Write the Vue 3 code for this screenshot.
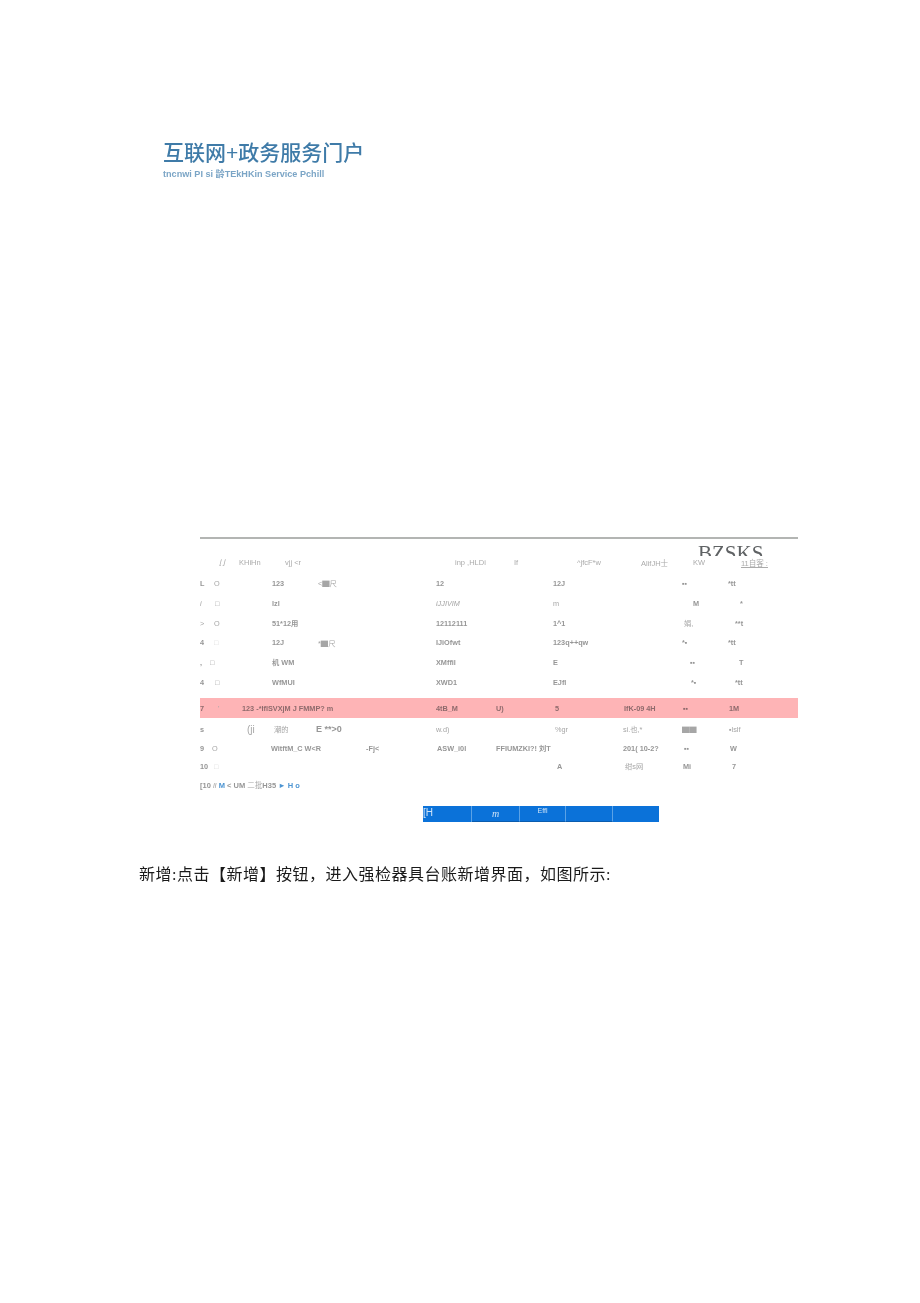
<script setup>
const END = 798
const left = 200
const mk = (cells) => cells.map((c, i) => {
  const next = i + 1 < cells.length ? cells[i + 1][0] : END
  return { text: c[1], w: next - c[0], cls: c[2] || '' }
})
const lead = (cells) => (cells[0][0] > left ? [[left, ''], ...cells] : cells)
const raw = [
  { cls: 'h20', cells: [[200, 'L'], [214, 'O', 'lt'], [272, '123'], [318, '<▇尺', 'lt'], [436, '12'], [553, '12J'], [682, '▪▪'], [728, '*tt']] },
  { cls: 'h20', cells: [[200, 'i', 'it lt'], [215, '□', 'lt'], [272, 'lzl'], [436, 'iJJIVIM', 'it lt'], [553, 'm', 'lt'], [693, 'M'], [740, '*']] },
  { cls: 'h20', cells: [[200, '>', 'lt'], [214, 'O', 'lt'], [272, '51*12用'], [436, '12112111'], [553, '1^1'], [684, '娟,', 'lt'], [735, '**t']] },
  { cls: 'h19', cells: [[200, '4'], [214, '□', 'xl'], [272, '12J'], [318, '*▇尺', 'lt'], [436, 'IJiOfwt'], [553, '123q++qw'], [682, '*▪'], [728, '*tt']] },
  { cls: 'h20', cells: [[200, ','], [210, '□', 'lt'], [272, '机 WM'], [436, 'XMffil'], [553, 'E'], [690, '▪▪'], [739, 'T']] },
  { cls: 'h20', cells: [[200, '4'], [215, '□', 'lt'], [272, 'WfMUI'], [436, 'XWD1'], [553, 'EJfl'], [691, '*▪'], [735, '*tt']] },
]
const rows = raw.map((r) => ({ cls: r.cls, cells: mk(lead(r.cells)) }))
const header = mk([[200, ''], [219, '⌊⌋', 'it'], [239, 'KHiHn'], [285, 'vjj <r'], [455, 'inp ,HLDi'], [514, 'If'], [577, '^jfcF*w'], [641, 'AlifJH士'], [693, 'KW'], [741, '11自客 :', 'ul']])
const pink = mk([[200, '7'], [218, "'", 'lt'], [242, '123 -*IflSVXjM J FMMP? m'], [436, '4tB_M'], [496, 'U)'], [555, '5'], [624, 'IfK-09 4H'], [683, '▪▪'], [729, '1M']])
const lower = [
  { cls: 'h20', cells: mk([[200, 's'], [247, '(ji', 'big lt'], [274, '潮的', 'lt'], [316, 'E **>0', 'mid'], [436, 'w.d)', 'lt'], [555, '%gr', 'lt'], [623, 'si.也,*', 'lt'], [682, '▇▇', 'lt'], [729, '▪lslf', 'lt']]) },
  { cls: 'h18', cells: mk([[200, '9'], [212, 'O', 'lt'], [271, 'WitftM_C W<R'], [366, '-Fj<'], [437, 'ASW_i0l'], [496, 'FFIUMZKI?! 刘T'], [623, '201( 10-2?'], [684, '▪▪'], [730, 'W']]) },
  { cls: 'h18', cells: mk([[200, '10'], [214, '□', 'xl'], [557, 'A'], [625, '绀s网', 'lt'], [683, 'Mi'], [732, '7']]) },
]
const segments = [
  { w: 49, text: '[H', cls: 'first' },
  { w: 48, text: 'm', cls: 'ital under' },
  { w: 46, text: 'Effl', cls: 'raise under' },
  { w: 47, text: '', cls: 'under' },
  { w: 46, text: '', cls: '' },
]
</script>

<template>
  <main class="page">
    <header class="brand">
      <h1 class="brand-title">互联网+政务服务门户</h1>
      <p class="brand-sub">tncnwi PI si 龄TEkHKin Service Pchill</p>
    </header>

    <section class="sheet">
      <div class="stamp">BZSKS</div>
      <div class="row head">
        <span v-for="(c, i) in header" :key="i" class="cell" :class="c.cls" :style="{ width: c.w + 'px' }">{{ c.text }}</span>
      </div>
      <div v-for="(r, ri) in rows" :key="ri" class="row" :class="r.cls">
        <span v-for="(c, i) in r.cells" :key="i" class="cell" :class="c.cls" :style="{ width: c.w + 'px' }">{{ c.text }}</span>
      </div>
      <div class="row pink">
        <span v-for="(c, i) in pink" :key="i" class="cell" :class="c.cls" :style="{ width: c.w + 'px' }">{{ c.text }}</span>
      </div>
      <div v-for="(r, ri) in lower" :key="'l' + ri" class="row" :class="r.cls">
        <span v-for="(c, i) in r.cells" :key="i" class="cell" :class="c.cls" :style="{ width: c.w + 'px' }">{{ c.text }}</span>
      </div>
      <p class="pager">[10 <i class="lt">lI</i> <span class="blue">M</span> &lt; UM <span class="lt">二批</span>H35 <span class="blue">► H o</span></p>
      <div class="bar">
        <span v-for="(s, i) in segments" :key="i" class="seg" :class="s.cls" :style="{ width: s.w + 'px' }">{{ s.text }}</span>
      </div>
    </section>

    <p class="note">新增:点击【新增】按钮&#xFF0C;进入强检器具台账新增界面&#xFF0C;如图所示:</p>
  </main>
</template>

<style scoped>
.page {
  width: 920px;
  height: 1303px;
  overflow: hidden;
  background: #fff;
  font-family: "Liberation Sans", "Noto Sans CJK SC", sans-serif;
  filter: blur(0.3px);
}
.brand {
  padding: 141px 0 0 163px;
}
.brand-title {
  margin: 0;
  font-size: 21px;
  line-height: 24px;
  font-weight: 500;
  color: #3f7ba8;
  font-family: "Liberation Sans", "Noto Sans CJK SC", sans-serif;
}
.brand-sub {
  margin: 3px 0 0;
  font-size: 9.1px;
  line-height: 12px;
  font-weight: 700;
  color: #7ba5c6;
  white-space: nowrap;
}
.sheet {
  position: relative;
  width: 598px;
  margin: 357px 0 0 200px;
  border-top: 2px solid #b3b5b3;
  padding-top: 17px;
}
.stamp {
  position: absolute;
  top: 3px;
  left: 498px;
  height: 14px;
  overflow: hidden;
  font-family: "Liberation Serif", serif;
  font-size: 21px;
  line-height: 22px;
  letter-spacing: 0;
  color: #5f6264;
}
.row {
  display: flex;
  align-items: center;
  font-size: 7.3px;
  font-weight: 700;
  color: #969696;
  white-space: nowrap;
}
.cell {
  display: block;
  flex: none;
  overflow: visible;
}
.head {
  height: 13px;
  margin-bottom: 4px;
  font-size: 7.5px;
  font-weight: 400;
  color: #ababab;
}
.h18 { height: 18px; }
.h19 { height: 19px; }
.h20 { height: 20px; }
.pink {
  height: 20px;
  margin-top: 6px;
  margin-bottom: 1px;
  background: #feb4b6;
  color: #8e6a6c;
}
.lt { font-weight: 400; color: #a6a6a6; }
.xl { font-weight: 400; color: #d8d8d8; }
.it { font-style: italic; }
.ul { text-decoration: underline; }
.big { font-size: 10px; }
.mid { font-size: 9px; }
.pager {
  margin: 5px 0 0;
  height: 12px;
  font-size: 7.5px;
  line-height: 12px;
  font-weight: 700;
  color: #969696;
  white-space: nowrap;
}
.blue { color: #4c94d2; }
.bar {
  display: flex;
  width: 236px;
  height: 16px;
  margin: 14px 0 0 223px;
  background: #0b72d9;
}
.seg {
  display: block;
  flex: none;
  box-sizing: border-box;
  height: 16px;
  font-size: 8px;
  line-height: 14px;
  color: #cfe3f7;
  border-right: 1px solid #5ba2e6;
}
.seg:last-child { border-right: 0; }
.first { font-size: 10px; }
.ital { font-style: italic; text-align: center; font-family: "Liberation Serif", serif; font-size: 10px; line-height: 16px; }
.raise { text-align: center; font-size: 7px; line-height: 9px; }
.under { border-bottom: 1px solid #0a5cae; }
.note {
  margin: 43px 0 0 139px;
  font-family: "Liberation Serif", "Noto Sans CJK SC", serif;
  font-size: 16px;
  line-height: 20px;
  letter-spacing: 0.5px;
  color: #1a1a1a;
  white-space: nowrap;
}
</style>
